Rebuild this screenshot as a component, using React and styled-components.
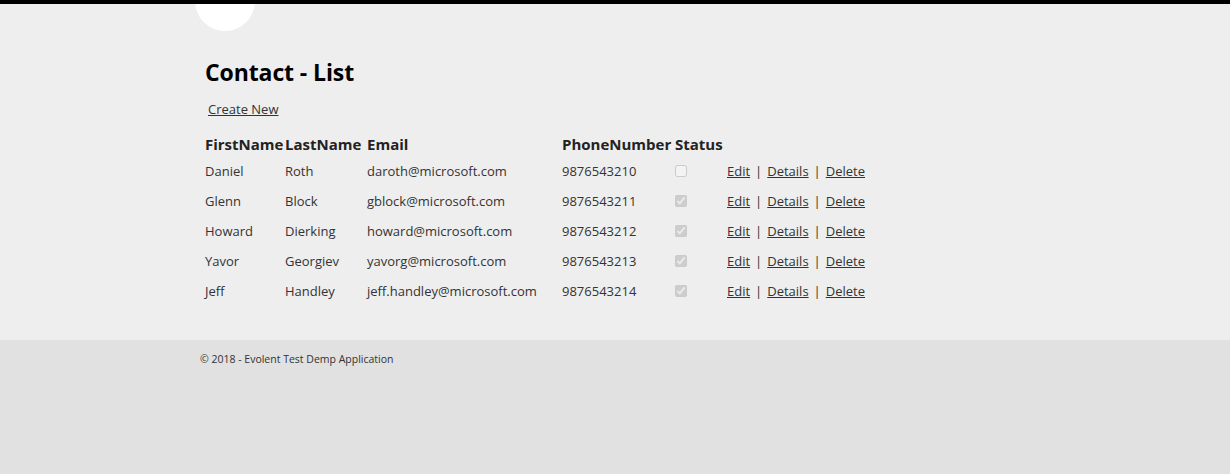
import React from 'react';
import styled, { createGlobalStyle } from 'styled-components';

const GlobalStyle = createGlobalStyle`
	html, body {
		margin: 0;
		padding: 0;
		background: #e1e1e1;
		font-family: 'Open Sans', 'Noto Sans', sans-serif;
		color: #333;
	}
	#root {
		min-height: 100vh;
		display: flex;
		flex-direction: column;
	}
`;

const TopBar = styled.div`
	height: 4px;
	background: #000;
`;

const Main = styled.main`
	position: relative;
	background: #eeeeee;
	height: 336px;
	overflow: hidden;
`;

const Logo = styled.div`
	position: absolute;
	top: -33px;
	left: 195px;
	width: 60px;
	height: 60px;
	border-radius: 50%;
	background: #fff;
`;

const Content = styled.div`
	width: 830px;
	margin-left: 200px;
	padding: 54px 0 0 5px;
`;

const Title = styled.h2`
	margin: 0;
	font-size: 23px;
	font-weight: 700;
	color: #000;
	line-height: 28px;
	letter-spacing: -0.1px;
`;

const CreateLink = styled.a`
	display: inline-block;
	margin: 14px 0 0 3px;
	font-size: 13px;
	color: #333;
	text-decoration: underline;
	line-height: 18px;
`;

const Table = styled.table`
	margin-top: 13px;
	border-collapse: collapse;
	table-layout: fixed;
	width: 700px;
`;

const Th = styled.th`
	width: ${p => p.$w}px;
	padding: 0;
	text-align: left;
	font-size: 15px;
	font-weight: 700;
	color: #222;
	height: 24px;
	white-space: nowrap;
`;

const Td = styled.td`
	padding: 0;
	height: 30px;
	font-size: 13px;
	color: #333;
	white-space: nowrap;
	vertical-align: middle;
`;

const Check = styled.input`
	margin: -4px 0 0 0;
	width: 12px;
	height: 12px;
	vertical-align: middle;
`;

const Action = styled.a`
	font-size: 13px;
	color: #333;
	text-decoration: underline;
`;

const Sep = styled.span`
	margin: 0 5px;
	color: #333;
`;

const Footer = styled.footer`
	flex: 1;
	background: #e1e1e1;
	padding: 12px 0 0 200px;
	font-size: 10.5px;
	color: #333;
`;

const contacts = [
	['Daniel', 'Roth', 'daroth@microsoft.com', '9876543210', false],
	['Glenn', 'Block', 'gblock@microsoft.com', '9876543211', true],
	['Howard', 'Dierking', 'howard@microsoft.com', '9876543212', true],
	['Yavor', 'Georgiev', 'yavorg@microsoft.com', '9876543213', true],
	['Jeff', 'Handley', 'jeff.handley@microsoft.com', '9876543214', true],
];

const App = () => {
	return (
		<>
			<GlobalStyle />
			<TopBar />
			<Main>
				<Logo />
				<Content>
					<Title>Contact - List</Title>
					<CreateLink href="#">Create New</CreateLink>
					<Table>
						<thead>
							<tr>
								<Th $w={80}>FirstName</Th>
								<Th $w={82}>LastName</Th>
								<Th $w={195}>Email</Th>
								<Th $w={113}>PhoneNumber</Th>
								<Th $w={52}>Status</Th>
								<Th $w={178}></Th>
							</tr>
						</thead>
						<tbody>
							{contacts.map(c => (
								<tr key={c[3]}>
									<Td>{c[0]}</Td>
									<Td>{c[1]}</Td>
									<Td>{c[2]}</Td>
									<Td>{c[3]}</Td>
									<Td>
										<Check type="checkbox" checked={c[4]} disabled readOnly />
									</Td>
									<Td>
										<Action href="#">Edit</Action>
										<Sep>|</Sep>
										<Action href="#">Details</Action>
										<Sep>|</Sep>
										<Action href="#">Delete</Action>
									</Td>
								</tr>
							))}
						</tbody>
					</Table>
				</Content>
			</Main>
			<Footer>© 2018 - Evolent Test Demp Application</Footer>
		</>
	);
};

export default App;
